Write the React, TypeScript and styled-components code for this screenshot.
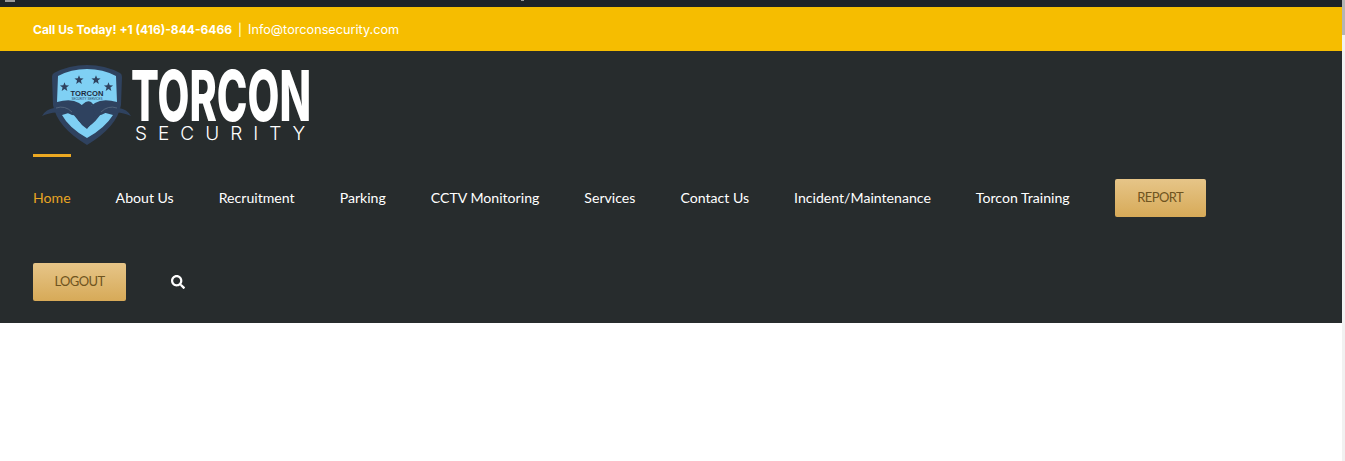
import React from "react";
import styled, { createGlobalStyle } from "styled-components";
import { FaSearch } from "react-icons/fa";

const GlobalStyle = createGlobalStyle`
  html, body {
    margin: 0;
    padding: 0;
    background: #fff;
    overflow: hidden;
  }
`;

const Page = styled.div`
  width: 1345px;
  height: 461px;
  display: flex;
`;

const Main = styled.div`
  flex: 1;
  min-width: 0;
`;

const Scrollbar = styled.div`
  width: 3px;
  background: #f1f1f1;
`;

const ScrollThumb = styled.div`
  height: 35px;
  background: #b4b4b4;
`;

const BrowserStrip = styled.div`
  height: 7px;
  background: #1e2327;
  display: flex;
  align-items: flex-start;
`;

const StripMark = styled.span<{ $left: number; $width: number; $height: number }>`
  margin-left: ${(p) => p.$left}px;
  width: ${(p) => p.$width}px;
  height: ${(p) => p.$height}px;
  background: #9a9a9a;
`;

const TopBar = styled.div`
  height: 44px;
  background: #f6bd00;
  padding-left: 33px;
  display: flex;
  align-items: center;
  gap: 6px;
  color: #fff;
  font-family: "Inter", "Open Sans", sans-serif;
  font-size: 12px;
`;

const Phone = styled.span`
  font-weight: 700;
`;

const Email = styled.span`
  font-size: 12.7px;
`;

const Header = styled.header`
  height: 272px;
  background: #272c2d;
  padding-left: 33px;
`;

const LogoRow = styled.div`
  height: 105px;
  display: flex;
  align-items: flex-start;
`;

const LogoLink = styled.div`
  margin: 14px 0 0 8px;
  display: flex;
`;

const Shield = styled.svg`
  width: 90px;
  height: 82px;
  display: block;
`;

const Wordmark = styled.div`
  margin: 5px 0 0 0;
  width: 180px;
  color: #fff;
`;

const BrandName = styled.div`
  font-family: "Inter", "Liberation Sans", sans-serif;
  font-weight: 800;
  font-size: 70px;
  line-height: 51px;
  transform-origin: left top;
  transform: scaleX(0.59);
  white-space: nowrap;
`;

const BrandSub = styled.div`
  margin: 4px 0 0 4px;
  font-family: "Inter", sans-serif;
  font-size: 19px;
  font-weight: 300;
  line-height: 18px;
  letter-spacing: 11px;
  white-space: nowrap;
`;

const Nav = styled.nav`
  width: 1240px;
  display: flex;
  flex-wrap: wrap;
  align-items: center;
`;

const NavItem = styled.a<{ $active?: boolean }>`
  position: relative;
  height: 84px;
  margin-right: 45px;
  box-sizing: border-box;
  padding-bottom: 2px;
  display: flex;
  align-items: center;
  color: ${(p) => (p.$active ? "#e8a523" : "#fff")};
  font-family: "Lato", sans-serif;
  font-size: 14.12px;
  white-space: nowrap;

  &::before {
    content: "";
    display: ${(p) => (p.$active ? "block" : "none")};
    position: absolute;
    top: -2px;
    left: 0;
    right: 0;
    height: 3px;
    background: #eca922;
  }
`;

const GoldButton = styled.a<{ $width: number }>`
  width: ${(p) => p.$width}px;
  height: 38px;
  margin: 23px 45px 23px 0;
  padding-bottom: 2px;
  box-sizing: border-box;
  display: flex;
  align-items: center;
  justify-content: center;
  border-radius: 2px;
  background: linear-gradient(#e6c588, #d7aa58);
  color: #6f5420;
  font-family: "Lato", sans-serif;
  font-size: 13px;
  letter-spacing: -0.6px;
`;

const SearchButton = styled.a`
  display: flex;
  align-items: center;
  color: #fff;
  font-size: 14px;
`;

const navLinks = [
  "About Us",
  "Recruitment",
  "Parking",
  "CCTV Monitoring",
  "Services",
  "Contact Us",
  "Incident/Maintenance",
  "Torcon Training",
];

const Star = ({ x, y, r }: { x: number; y: number; r: number }) => {
  const pts = Array.from({ length: 10 }, (_, i) => {
    const a = -Math.PI / 2 + (i * Math.PI) / 5;
    const d = i % 2 ? r * 0.42 : r;
    return `${x + d * Math.cos(a)},${y + d * Math.sin(a)}`;
  }).join(" ");
  return <polygon points={pts} fill="#2f425f" />;
};

const ShieldLogo = () => (
  <Shield viewBox="0 0 90 82">
    {/* outer shield */}
    <path
      d="M13 8 Q28 0 46 0 Q64 0 79 8 Q81 9 81 12 L80 40 Q76 62 46 80 Q16 62 12 40 L11 12 Q11 9 13 8 Z"
      fill="#2f425f"
    />
    {/* top panel */}
    <path
      d="M17 11 Q30 4 46 4 Q62 4 75 11 L76 37 Q62 33 54 38 L46 44 L38 38 Q30 33 16 37 Z"
      fill="#7fd0f4"
    />
    <Star x={38} y={15} r={4.8} />
    <Star x={55} y={15} r={4.8} />
    <Star x={23.5} y={22} r={4.8} />
    <Star x={67.5} y={22} r={4.8} />
    <text
      x="46"
      y="31"
      textAnchor="middle"
      fontFamily="Liberation Sans"
      fontWeight="700"
      fontSize="7.6"
      fill="#1c2b3f"
    >
      TORCON
    </text>
    <text
      x="46"
      y="35.4"
      textAnchor="middle"
      fontFamily="Liberation Sans"
      fontSize="3"
      fill="#2f425f"
    >
      SECURITY SERVICES
    </text>
    {/* lower blue chevron */}
    <path
      d="M21 50 L31 47 Q36 56 46 63 Q56 56 61 47 L72 50 Q64 63 46 73 Q28 63 21 50 Z"
      fill="#7fd0f4"
    />
    {/* eagle body and head */}
    <path
      d="M46 64 Q34 56 35 45 L42 39 Q46 35 50 37 L53 40 L50 41 Q58 50 46 64 Z"
      fill="#2f425f"
    />
    {/* wings */}
    <path
      d="M1 51 Q5 44 13 43 Q20 37 28 39 Q36 42 39 51 L31 50 Q24 46 20 48 Q12 46 1 51 Z"
      fill="#2f425f"
    />
    <path
      d="M90 51 Q86 44 78 43 Q71 37 63 39 Q55 42 52 51 L60 50 Q67 46 71 48 Q79 46 90 51 Z"
      fill="#2f425f"
    />
    <path d="M15 43 Q24 40 31 47" stroke="#5b6c82" strokeWidth="0.8" fill="none" />
    <path d="M76 43 Q67 40 60 47" stroke="#5b6c82" strokeWidth="0.8" fill="none" />
  </Shield>
);

export default function App() {
  return (
    <Page>
      <GlobalStyle />
      <Main>
        <BrowserStrip>
          <StripMark $left={5} $width={10} $height={2} />
          <StripMark $left={506} $width={3} $height={1} />
        </BrowserStrip>
        <TopBar>
          <Phone>Call Us Today! +1 (416)-844-6466</Phone>
          <span>|</span>
          <Email>Info@torconsecurity.com</Email>
        </TopBar>
        <Header>
          <LogoRow>
            <LogoLink>
              <ShieldLogo />
              <Wordmark>
                <BrandName>TORCON</BrandName>
                <BrandSub>SECURITY</BrandSub>
              </Wordmark>
            </LogoLink>
          </LogoRow>
          <Nav>
            <NavItem $active>Home</NavItem>
            {navLinks.map((label) => (
              <NavItem key={label}>{label}</NavItem>
            ))}
            <GoldButton $width={91}>REPORT</GoldButton>
            <GoldButton $width={93}>LOGOUT</GoldButton>
            <SearchButton>
              <FaSearch />
            </SearchButton>
          </Nav>
        </Header>
      </Main>
      <Scrollbar>
        <ScrollThumb />
      </Scrollbar>
    </Page>
  );
}
